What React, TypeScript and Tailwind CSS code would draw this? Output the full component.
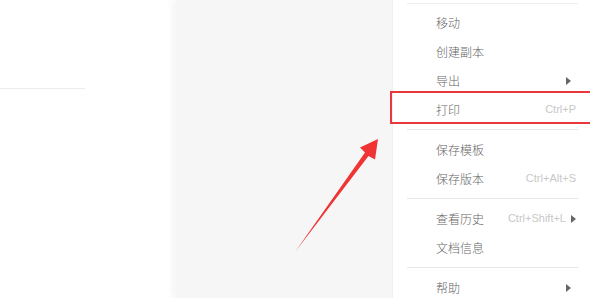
import React from "react";

type Item = { label: string; shortcut?: string; sub?: boolean };

const groups: Item[][] = [
  [{ label: "移动" }, { label: "创建副本" }, { label: "导出", sub: true }, { label: "打印", shortcut: "Ctrl+P" }],
  [{ label: "保存模板" }, { label: "保存版本", shortcut: "Ctrl+Alt+S" }],
  [{ label: "查看历史", shortcut: "Ctrl+Shift+L", sub: true }, { label: "文档信息" }],
  [{ label: "帮助", sub: true }],
];

function Caret() {
  return (
    <svg width="5" height="8" viewBox="0 0 5 8" className="ml-[5px] shrink-0">
      <path d="M0 0 L5 4 L0 8 Z" fill="#666" />
    </svg>
  );
}

function Row({ item }: { item: Item }) {
  return (
    <div className="flex h-[29px] items-center pl-[43px] pr-[14px]">
      <span className="text-[12px] font-light text-[#666] leading-none" style={{ fontFamily: '"Noto Sans CJK SC", sans-serif' }}>
        {item.label}
      </span>
      <div className="ml-auto flex items-center">
        {item.shortcut && (
          <span className="text-[11px] text-[#c8c8c8] leading-none" style={{ fontFamily: '"Liberation Sans", Arial, sans-serif' }}>
            {item.shortcut}
          </span>
        )}
        {item.sub && <Caret />}
        {item.sub && !item.shortcut && <span className="w-[5px]" />}
      </div>
    </div>
  );
}

function Sep() {
  return (
    <div className="py-[5px] pl-[14px] pr-[12px]">
      <div className="h-px bg-[#e6e6e6]" />
    </div>
  );
}

export default function App() {
  return (
    <div className="relative flex h-[298px] w-[590px] overflow-hidden bg-white" style={{ fontFamily: '"Noto Sans CJK SC", sans-serif' }}>
      <div className="w-[176px] shrink-0 bg-white">
        <div className="h-[88px]" />
        <div className="h-px w-[85px] bg-[#ececec]" />
      </div>
      <div className="w-[216px] shrink-0 bg-[#f6f6f6] shadow-[-5px_0_6px_rgba(0,0,0,0.035)]" />
      <div className="flex-1 bg-white border-l border-[#f0f0f0]">
        <div className="h-[3px]" />
        <div className="ml-[14px] mr-[12px] h-px bg-[#eeeeee]" />
        <div className="h-[4px]" />
        {groups.map((g, gi) => (
          <React.Fragment key={gi}>
            {gi > 0 && <Sep />}
            {g.map((it) => (
              <Row key={it.label} item={it} />
            ))}
          </React.Fragment>
        ))}
      </div>
      <div className="pointer-events-none absolute left-[390px] top-[91px] h-[33px] w-[210px] border-2 border-[#e8383b]" />
      <svg className="pointer-events-none absolute left-0 top-0" width="590" height="298">
        <polygon
          points="295,252 368.5,156 375,159.5 378,139 360,147.5 365,152.5"
          fill="#f03434"
        />
      </svg>
    </div>
  );
}
